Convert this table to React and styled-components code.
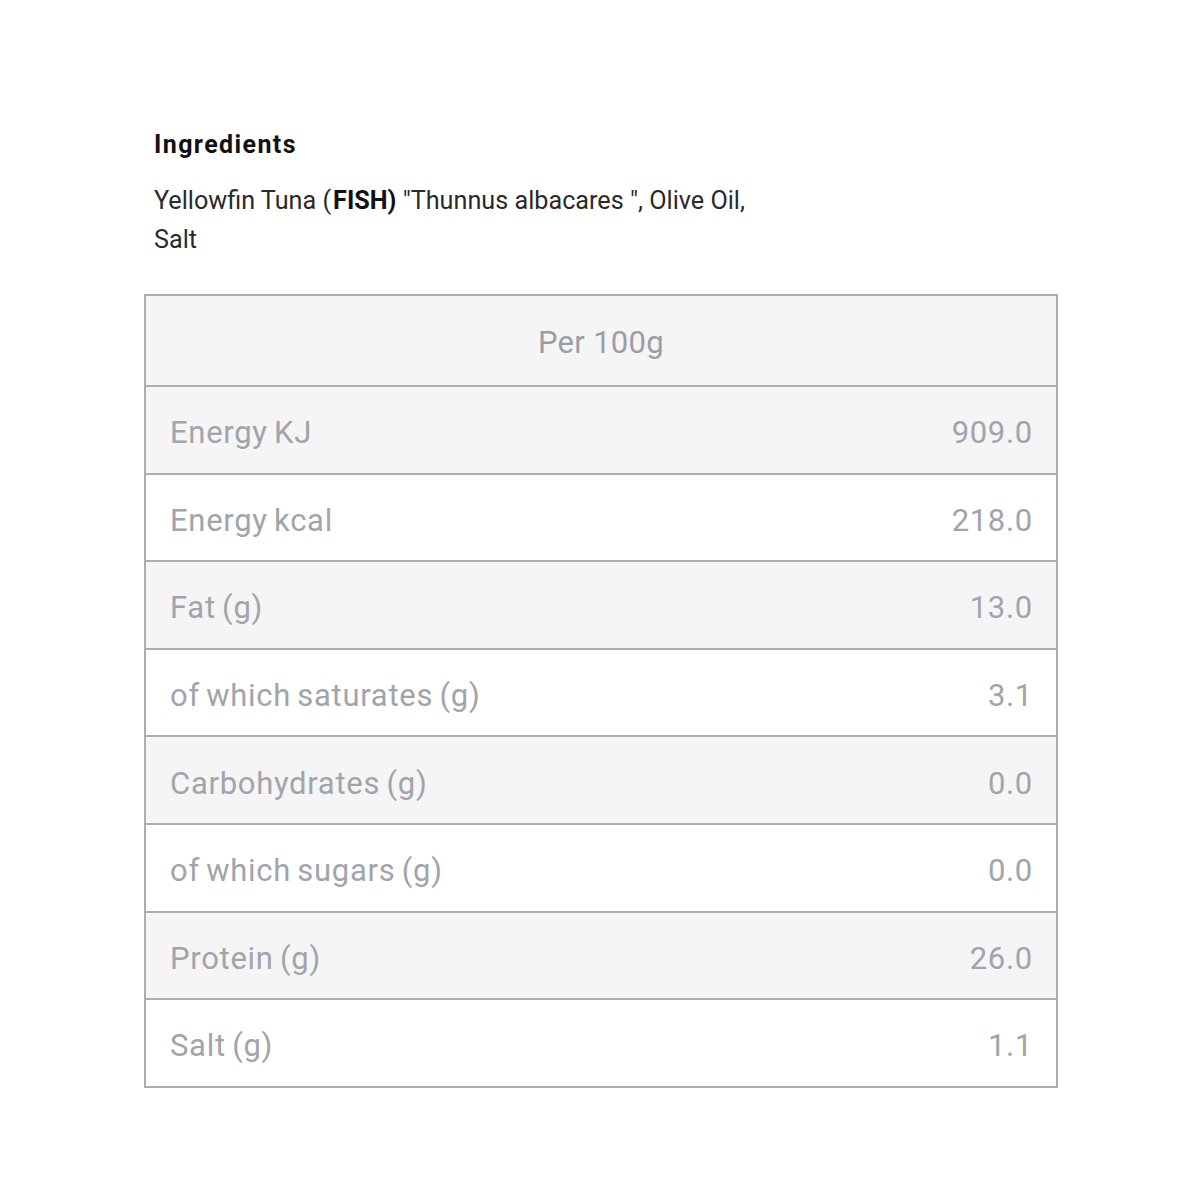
import React from "react";
import styled, { createGlobalStyle } from "styled-components";

const Global = createGlobalStyle`
  html, body { margin: 0; padding: 0; background: #fff; }
  body { font-family: Roboto, "Liberation Sans", sans-serif; }
`;

const Page = styled.div`
  width: 1200px;
  height: 1200px;
  box-sizing: border-box;
  padding: 128px 142px 0 144px;
`;

const Ingredients = styled.section`
  padding-left: 10px;
  margin-bottom: 35px;
`;

const Heading = styled.h3`
  margin: 0 0 19px;
  font-size: 25px;
  font-weight: 700;
  color: #111;
  line-height: 34px;
  letter-spacing: 1.4px;
`;

const Text = styled.p`
  margin: 0;
  width: 600px;
  font-size: 25.2px;
  line-height: 39px;
  color: #2a2a2a;
  letter-spacing: 0px;
`;

const Allergen = styled.b`
  display: inline-block;
  margin-left: 2px;
  font-weight: 700;
  color: #111;
`;

const Table = styled.div`
  width: 914px;
  border: 2px solid #adadad;
  box-sizing: border-box;
  display: flex;
  flex-direction: column;
`;

const HeaderRow = styled.div`
  height: 91px;
  box-sizing: border-box;
  padding-top: 3px;
  background: #f5f5f5;
  display: flex;
  align-items: center;
  justify-content: center;
  font-size: 31px;
  color: #9c9ea6;
  letter-spacing: 0.3px;
  border-bottom: 2px solid #adadad;
`;

const Row = styled.div`
  height: 85.6px;
  box-sizing: content-box;
  display: flex;
  align-items: center;
  justify-content: space-between;
  padding: 0 23px 0 24px;
  background: ${(p) => (p.$shaded ? "#f5f5f5" : "#fff")};
  border-bottom: ${(p) => (p.$last ? "none" : "2px solid #adadad")};
  font-size: 31px;
  color: #a2a4ab;
  letter-spacing: 0.7px;
  word-spacing: -2px;
`;

const Cell = styled.span`
  position: relative;
  top: 3px;
`;

const rows = [
  ["Energy KJ", "909.0"],
  ["Energy kcal", "218.0"],
  ["Fat (g)", "13.0"],
  ["of which saturates (g)", "3.1"],
  ["Carbohydrates (g)", "0.0"],
  ["of which sugars (g)", "0.0"],
  ["Protein (g)", "26.0"],
  ["Salt (g)", "1.1"],
];

export default function App() {
  return (
    <Page>
      <Global />
      <Ingredients>
        <Heading>Ingredients</Heading>
        <Text>
          Yellowfin Tuna (<Allergen>FISH)</Allergen> "Thunnus albacares ", Olive Oil, Salt
        </Text>
      </Ingredients>
      <Table>
        <HeaderRow>Per 100g</HeaderRow>
        {rows.map(([label, value], i) => (
          <Row key={label} $shaded={i % 2 === 0} $last={i === rows.length - 1}>
            <Cell>{label}</Cell>
            <Cell>{value}</Cell>
          </Row>
        ))}
      </Table>
    </Page>
  );
}
